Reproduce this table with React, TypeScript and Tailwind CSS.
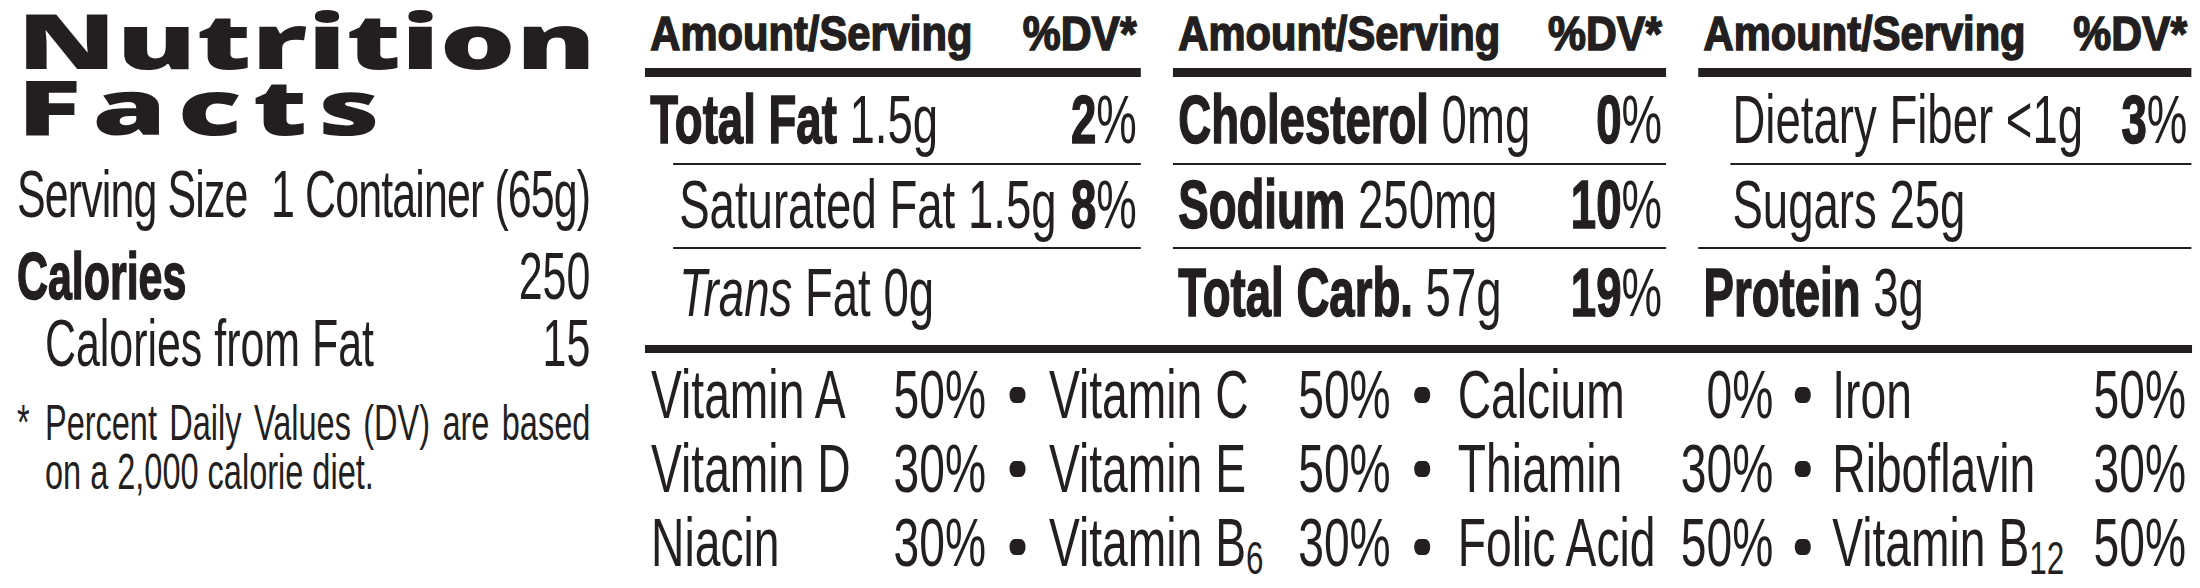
import type { ReactNode } from "react";

// Helvetica Condensed look: Liberation Sans squeezed horizontally
const sans = "font-['Liberation_Sans',Arial,sans-serif]";
const heavy = "font-bold [-webkit-text-stroke:1.6px_#231f20]";

function Pct({ v }: { v: string }) {
  return (
    <span className="whitespace-nowrap">
      <span className={heavy}>{v}</span>%
    </span>
  );
}

function Rule({ className = "" }: { className?: string }) {
  return <div className={`h-[2px] bg-[#231f20] ${className}`} />;
}

type Cell = { label: ReactNode; pct?: string; indent?: boolean };

function Column({
  rows,
  rules,
}: {
  rows: [Cell, Cell, Cell];
  rules: [string, string];
}) {
  const rowCls = (c: Cell) =>
    `flex items-end justify-between pr-[6px] text-[68px] leading-none ${
      c.indent ? "pl-[51px]" : "pl-[8px]"
    }`;
  return (
    <div className="flex flex-col">
      <div className="flex h-[68px] items-end justify-between pb-[10px] pl-[8px] pr-[6px] text-[49px] leading-none">
        <span className={`inline-block origin-left scale-x-[1.27] ${heavy}`}>
          Amount/Serving
        </span>
        <span className={`inline-block origin-right scale-x-[1.3] ${heavy}`}>
          %DV*
        </span>
      </div>
      <div className="h-[9px] bg-[#231f20]" />
      <div className={`h-[86px] pb-[10px] ${rowCls(rows[0])}`}>
        <span className="whitespace-nowrap">{rows[0].label}</span>
        {rows[0].pct && <Pct v={rows[0].pct} />}
      </div>
      <Rule className={rules[0]} />
      <div className={`h-[82px] pb-[9px] ${rowCls(rows[1])}`}>
        <span className="whitespace-nowrap">{rows[1].label}</span>
        {rows[1].pct && <Pct v={rows[1].pct} />}
      </div>
      <Rule className={rules[1]} />
      <div className={`h-[96px] pb-[19px] ${rowCls(rows[2])}`}>
        <span className="whitespace-nowrap">{rows[2].label}</span>
        {rows[2].pct && <Pct v={rows[2].pct} />}
      </div>
    </div>
  );
}

const Sub = ({ children }: { children: ReactNode }) => (
  <span className="relative top-[8px] text-[0.68em]">{children}</span>
);

const vitamins: [ReactNode, string][][] = [
  [
    ["Vitamin A", "50%"],
    ["Vitamin C", "50%"],
    ["Calcium", "0%"],
    ["Iron", "50%"],
  ],
  [
    ["Vitamin D", "30%"],
    ["Vitamin E", "50%"],
    ["Thiamin", "30%"],
    ["Riboflavin", "30%"],
  ],
  [
    ["Niacin", "30%"],
    [
      <>
        Vitamin B<Sub>6</Sub>
      </>,
      "30%",
    ],
    ["Folic Acid", "50%"],
    [
      <>
        Vitamin B<Sub>12</Sub>
      </>,
      "50%",
    ],
  ],
];

const cellW = ["w-[500px]", "w-[510px]", "w-[477px] pl-[6px]", "w-[528px]"];
const dotW = ["", "w-[94px]", "w-[94px]", "w-[88px]"];

function Dot({ w }: { w: string }) {
  return (
    <span className={`flex items-center justify-center ${w}`}>
      <span className="h-[16px] w-[24px] rounded-full bg-[#231f20]" />
    </span>
  );
}

export default function App() {
  return (
    <div
      className={`flex h-[588px] w-[2200px] overflow-hidden bg-white text-[#231f20] ${sans}`}
    >
      {/* left block */}
      <div className="flex w-[645px] shrink-0 flex-col pl-[17px]">
        <div className="origin-left scale-x-[1.55] pt-[7px] font-['Noto_Sans',sans-serif] text-[77px] font-black leading-[66px]">
          <div>Nutrition</div>
          <div className="tracking-[7px]">Facts</div>
        </div>
        <div className="flex w-[882px] origin-left scale-x-[0.65] flex-col">
          <div className="mt-[22px] flex justify-between whitespace-pre text-[66px] leading-none tracking-[-0.02em]">
            <span>Serving Size </span>
            <span>1 Container (65g)</span>
          </div>
          <div className="mt-[16px] flex justify-between text-[66px] leading-none">
            <span className={heavy}>Calories</span>
            <span>250</span>
          </div>
          <div className="mt-[1px] flex justify-between pl-[43px] text-[66px] leading-none">
            <span>Calories from Fat</span>
            <span>15</span>
          </div>
          <div className="mt-[23px] flex text-[50px] leading-[49px]">
            <span className="w-[43px] shrink-0">*</span>
            <div className="flex-1">
              <div className="text-justify [text-align-last:justify]">
                Percent Daily Values (DV) are based
              </div>
              <div>on a 2,000 calorie diet.</div>
            </div>
          </div>
        </div>
      </div>

      {/* main table */}
      <div className="w-[1547px] shrink-0">
        <div className="flex w-[2309px] origin-left scale-x-[0.67] flex-col">
          <div className="grid grid-cols-[740px_736px_736px] gap-x-[48px]">
            <Column
              rows={[
                {
                  label: (
                    <>
                      <span className={heavy}>Total Fat</span> 1.5g
                    </>
                  ),
                  pct: "2",
                },
                { label: "Saturated Fat 1.5g", pct: "8", indent: true },
                {
                  label: (
                    <>
                      <i>Trans</i> Fat 0g
                    </>
                  ),
                  indent: true,
                },
              ]}
              rules={["ml-[42px]", "ml-[42px]"]}
            />
            <Column
              rows={[
                {
                  label: (
                    <>
                      <span className={heavy}>Cholesterol</span> 0mg
                    </>
                  ),
                  pct: "0",
                },
                {
                  label: (
                    <>
                      <span className={heavy}>Sodium</span> 250mg
                    </>
                  ),
                  pct: "10",
                },
                {
                  label: (
                    <>
                      <span className={heavy}>Total Carb.</span> 57g
                    </>
                  ),
                  pct: "19",
                },
              ]}
              rules={["", ""]}
            />
            <Column
              rows={[
                { label: "Dietary Fiber <1g", pct: "3", indent: true },
                { label: "Sugars 25g", indent: true },
                {
                  label: (
                    <>
                      <span className={heavy}>Protein</span> 3g
                    </>
                  ),
                },
              ]}
              rules={["ml-[48px]", ""]}
            />
          </div>
          <div className="h-[8px] bg-[#231f20]" />
          <div className="mt-[5px] flex flex-col pl-[9px] text-[69px] leading-[74px]">
            {vitamins.map((row, r) => (
              <div key={r} className="flex">
                {row.map(([name, pct], i) => (
                  <div key={i} className="flex">
                    {i > 0 && <Dot w={dotW[i]} />}
                    <div className={`flex justify-between ${cellW[i]}`}>
                      <span className="whitespace-nowrap">{name}</span>
                      <span>{pct}</span>
                    </div>
                  </div>
                ))}
              </div>
            ))}
          </div>
        </div>
      </div>
    </div>
  );
}
